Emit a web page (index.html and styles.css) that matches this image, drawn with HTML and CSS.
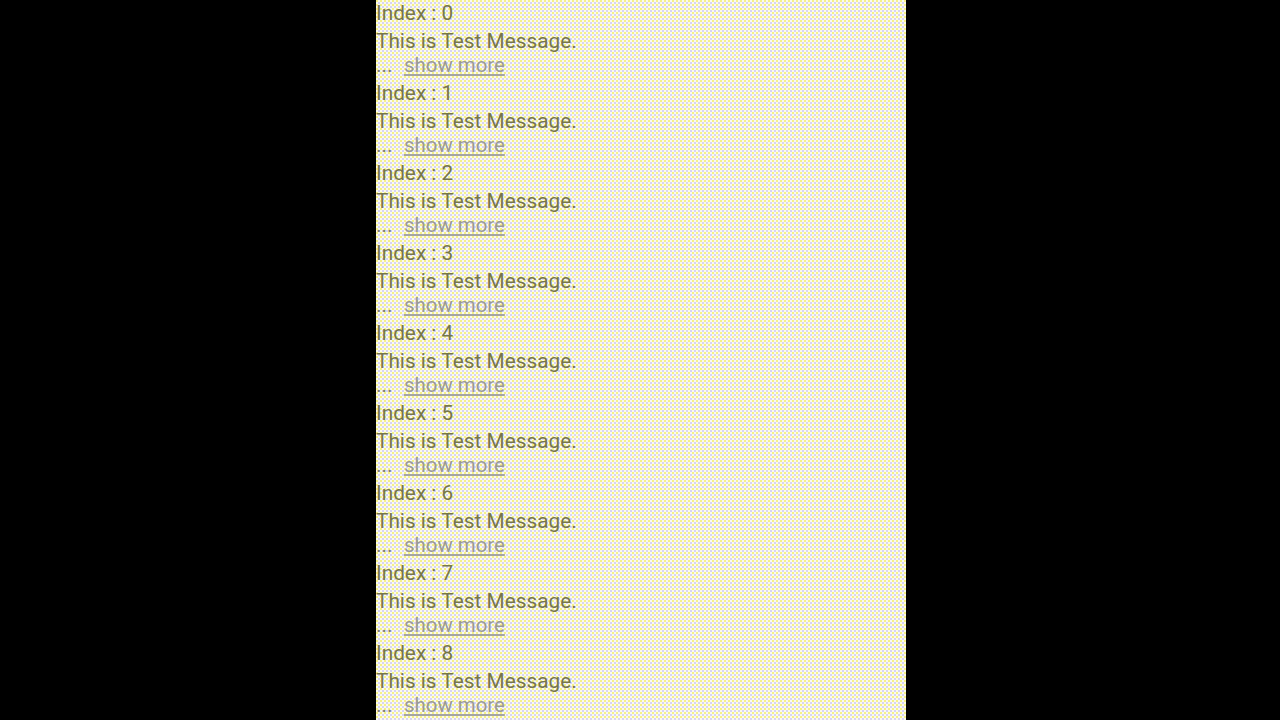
FILE: index.html
```html
<!DOCTYPE html>
<html>
<head>
<meta charset="utf-8">
<link rel="stylesheet" href="styles.css">
</head>
<body>
<div class="screen">
  <div class="list" id="list">
    <div class="item"><div class="index">Index : 0</div><div class="msg">This is Test Message.</div><div class="more"><span class="dots">...</span><span class="link">show more</span></div></div>
    <div class="item"><div class="index">Index : 1</div><div class="msg">This is Test Message.</div><div class="more"><span class="dots">...</span><span class="link">show more</span></div></div>
    <div class="item"><div class="index">Index : 2</div><div class="msg">This is Test Message.</div><div class="more"><span class="dots">...</span><span class="link">show more</span></div></div>
    <div class="item"><div class="index">Index : 3</div><div class="msg">This is Test Message.</div><div class="more"><span class="dots">...</span><span class="link">show more</span></div></div>
    <div class="item"><div class="index">Index : 4</div><div class="msg">This is Test Message.</div><div class="more"><span class="dots">...</span><span class="link">show more</span></div></div>
    <div class="item"><div class="index">Index : 5</div><div class="msg">This is Test Message.</div><div class="more"><span class="dots">...</span><span class="link">show more</span></div></div>
    <div class="item"><div class="index">Index : 6</div><div class="msg">This is Test Message.</div><div class="more"><span class="dots">...</span><span class="link">show more</span></div></div>
    <div class="item"><div class="index">Index : 7</div><div class="msg">This is Test Message.</div><div class="more"><span class="dots">...</span><span class="link">show more</span></div></div>
    <div class="item"><div class="index">Index : 8</div><div class="msg">This is Test Message.</div><div class="more"><span class="dots">...</span><span class="link">show more</span></div></div>
  </div>
</div>
</body>
</html>
```

FILE: styles.css
```css
html, body {
  margin: 0;
  padding: 0;
  background: #000;
  height: 720px;
  overflow: hidden;
}
.screen {
  display: flex;
  justify-content: center;
  height: 720px;
}
.list {
  width: 530px;
  margin-left: 2px;
  height: 720px;
  overflow: hidden;
  background-color: #fafaee;
  background-image:
    radial-gradient(circle at 1px 1px, #f4f08a 0.8px, transparent 1px),
    radial-gradient(circle at 3px 3px, #d8d4f4 0.8px, transparent 1px);
  background-size: 4px 4px;
  font-family: Roboto, "Noto Sans", sans-serif;
  font-size: 20.8px;
  color: #76764a;
  display: flex;
  flex-direction: column;
}
.item {
  height: 80px;
  box-sizing: border-box;
  padding-top: 1px;
  flex: none;
  display: flex;
  flex-direction: column;
}
.index {
  height: 24px;
  line-height: 24px;
}
.msg {
  margin-top: 4px;
  height: 24px;
  line-height: 24px;
}
.more {
  height: 24px;
  line-height: 24px;
  display: flex;
}
.dots {
  width: 28px;
  color: #808070;
}
.link {
  font-size: 20.4px;
  color: #9a9a96;
  text-decoration: underline;
  text-decoration-color: #a4a4a4;
  text-underline-offset: 2px;
}
```
